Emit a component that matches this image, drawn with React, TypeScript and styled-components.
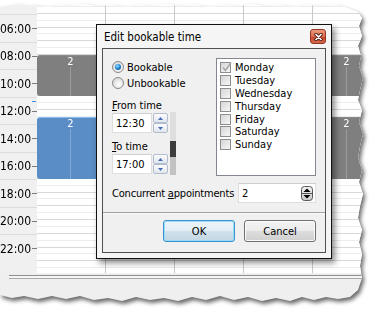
import styled, { createGlobalStyle } from 'styled-components'

const GlobalStyle = createGlobalStyle`
  html, body { margin: 0; padding: 0; background: #fff; }
  body {
    width: 377px;
    height: 313px;
    overflow: hidden;
    font-family: "DejaVu Sans Condensed", "DejaVu Sans", "Liberation Sans", sans-serif;
    font-stretch: condensed;
    font-size: 11px;
    color: #000;
  }
`

const HOUR_PX = 13.75
const START_HOUR = 4

// torn paper outline, clockwise from top-left
const TORN = [
  [0, 7], [8, 6], [18, 4], [26, 6], [34, 5], [48, 7], [60, 5], [72, 6], [85, 4], [98, 6],
  [112, 5], [126, 7], [140, 5], [152, 6], [166, 4], [180, 6], [196, 5], [210, 7], [224, 5],
  [238, 6], [252, 4], [266, 6], [280, 5], [294, 7], [308, 5], [322, 6], [336, 5], [348, 8],
  [358, 12], [362, 18], [359, 26], [362, 36], [358, 46], [361, 56], [359, 66], [363, 78],
  [360, 90], [358, 100], [362, 110], [359, 122], [363, 134], [360, 146], [358, 158],
  [362, 170], [359, 182], [363, 194], [360, 206], [358, 218], [362, 230], [359, 242],
  [362, 254], [360, 266], [362, 278], [358, 290], [350, 297], [338, 299], [326, 297],
  [314, 300], [302, 297], [290, 301], [276, 298], [262, 301], [248, 297], [234, 300],
  [220, 296], [206, 300], [192, 297], [178, 301], [164, 298], [150, 300], [136, 297],
  [122, 301], [108, 298], [94, 300], [80, 296], [66, 299], [52, 296], [38, 299], [24, 296],
  [12, 298], [0, 295],
].map(([x, y]) => `${x}px ${y}px`).join(', ')

const Stage = styled.div`
  position: relative;
  width: 377px;
  height: 313px;
  overflow: hidden;
`

const PaperShadow = styled.div`
  width: 377px;
  height: 313px;
  filter: drop-shadow(2px 3px 2px rgba(0, 0, 0, 0.6));
`

const Paper = styled.div`
  width: 100%;
  height: 100%;
  display: flex;
  flex-direction: column;
  background: #efefef;
  clip-path: polygon(${TORN});
`

const Calendar = styled.div`
  display: grid;
  grid-template-columns: 37px repeat(5, 69px);
  height: 273px;
  background: #fff;
  overflow: hidden;
`

const TimeColumn = styled.div`
  display: flex;
  flex-direction: column;
  padding-top: 14.25px;
  background: #f0f0f0;
`

const TimeSlot = styled.div`
  flex: 0 0 27.5px;
  box-sizing: border-box;
  border-top: 1px solid #dcdcdc;
  display: flex;
  align-items: center;
  justify-content: flex-end;
  position: relative;
`

const TimeLabel = styled.span`
  font-size: 12px;
  white-space: nowrap;
  margin-right: 1px;
`

const Tick = styled.span`
  width: 5px;
  height: 1px;
  background: #7a7a7a;
`

const NowMark = styled.span`
  position: absolute;
  right: 1px;
  top: 3px;
  width: 4px;
  height: 1px;
  background: #3b8fe0;
`

const DayColumn = styled.div`
  position: relative;
  border-right: 1px solid #c8c8c8;
  display: flex;
  flex-direction: column;
`

const HalfSlot = styled.div<{ $hour: boolean }>`
  flex: 0 0 6.875px;
  box-sizing: border-box;
  border-bottom: 1px solid ${p => (p.$hour ? '#d8d8d8' : '#ededed')};
`

const EventBlock = styled.div<{ $tone: 'gray' | 'blue' }>`
  position: absolute;
  left: 0;
  width: 67px;
  box-sizing: border-box;
  border-radius: 3px;
  background: ${p => (p.$tone === 'blue' ? '#5a8cc5' : '#7f7f7f')};
  border-top: 1px solid ${p => (p.$tone === 'blue' ? '#8cbcef' : '#8a8a8a')};
  color: #fff;
  font-size: 11px;
  text-align: center;
  line-height: 12px;
`

const EventLine = styled.span<{ $tone: 'gray' | 'blue' }>`
  position: absolute;
  left: 33px;
  top: 11px;
  bottom: 0;
  width: 1px;
  background: ${p => (p.$tone === 'blue' ? '#7ea8d8' : '#9c9c9c')};
`

const Footer = styled.div`
  flex: 1;
  padding-top: 2px;
`

const FooterRule = styled.div`
  margin-left: 9px;
  height: 4px;
  box-sizing: border-box;
  border-top: 1px solid #8e8e8e;
  border-bottom: 1px solid #a8a8a8;
  background: #f6f6f6;
`

/* dialog */

const Dialog = styled.div`
  position: absolute;
  left: 96px;
  top: 24px;
  width: 236px;
  height: 235px;
  box-sizing: border-box;
  border: 1px solid #111;
  background: #f5f5f5;
  display: flex;
  flex-direction: column;
  box-shadow: 3px 4px 6px rgba(0, 0, 0, 0.45);
`

const TitleBar = styled.div`
  height: 23px;
  flex: 0 0 23px;
  display: flex;
  align-items: center;
  justify-content: space-between;
  padding: 0 5px 0 7px;
`

const Title = styled.span`
  font-size: 11.5px;
  color: #000;
`

const CloseButton = styled.span`
  width: 16px;
  height: 15px;
  box-sizing: border-box;
  border: 1px solid #8f3522;
  border-radius: 3px;
  background: linear-gradient(#ee9a7e 0%, #dc6c4e 50%, #c7462a 51%, #d6674a 100%);
  display: flex;
  align-items: center;
  justify-content: center;
`

const Frame = styled.div`
  flex: 1;
  margin: 0 5px 5px;
  border: 1px solid #505050;
  background: #f0f0f0;
  display: flex;
  flex-direction: column;
`

const TopSection = styled.div`
  display: flex;
  justify-content: space-between;
  padding: 9px 9px 0;
`

const LeftCol = styled.div`
  display: flex;
  flex-direction: column;
  padding-top: 1px;
`

const RadioRow = styled.label`
  display: flex;
  align-items: center;
  gap: 3px;
  height: 16px;
`

const RadioDot = styled.span<{ $checked?: boolean }>`
  width: 12px;
  height: 12px;
  box-sizing: border-box;
  border-radius: 50%;
  border: 1px solid #8a8a8a;
  background: radial-gradient(circle at 60% 65%, #ffffff 0%, #e4e4e4 55%, #c9c9c9 100%);
  display: flex;
  align-items: center;
  justify-content: center;
  &::after {
    content: '';
    display: ${p => (p.$checked ? 'block' : 'none')};
    width: 6px;
    height: 6px;
    border-radius: 50%;
    background: radial-gradient(circle at 40% 35%, #a8e4ff 0%, #1f8ad6 45%, #0b3d70 100%);
  }
`

const TimeArea = styled.div`
  display: flex;
  margin-top: 8px;
`

const TimeFields = styled.div`
  display: flex;
  flex-direction: column;
`

const FieldLabel = styled.div<{ $gap?: number }>`
  height: 14px;
  line-height: 14px;
  margin-top: ${p => p.$gap ?? 0}px;
  white-space: nowrap;
`

const InputRow = styled.div`
  display: flex;
  height: 20px;
`

const TextBox = styled.div<{ $width: number }>`
  width: ${p => p.$width}px;
  flex: 0 0 auto;
  height: 20px;
  box-sizing: border-box;
  border: 1px solid #dedede;
  border-top-color: #cfcfcf;
  background: #fff;
  padding: 0 2px 0 3px;
  display: flex;
  align-items: center;
  justify-content: space-between;
`

const SpinPair = styled.div`
  display: flex;
  flex-direction: column;
  margin-left: 1px;
`

const SpinButton = styled.span`
  width: 15px;
  height: 10px;
  box-sizing: border-box;
  border: 1px solid #b3bccb;
  border-radius: 2px;
  background: linear-gradient(#fbfcfe, #e1e6ee);
  display: flex;
  align-items: center;
  justify-content: center;
`

const Strip = styled.div`
  width: 6px;
  height: 63px;
  margin: 12.5px 0 0 2px;
  background: linear-gradient(
    to bottom,
    #dedede 0, #dedede 29px,
    #3c3c3c 29px, #3c3c3c 45px,
    #c2c2c2 45px, #c2c2c2 100%
  );
`

const DayList = styled.div`
  width: 100px;
  height: 118px;
  box-sizing: border-box;
  border: 1px solid #828790;
  background: #fff;
  padding: 2px 0 0 3px;
  display: flex;
  flex-direction: column;
`

const DayRow = styled.label`
  display: flex;
  align-items: center;
  gap: 4px;
  height: 12.9px;
`

const CheckBox = styled.span`
  position: relative;
  width: 11px;
  height: 11px;
  box-sizing: border-box;
  border: 1px solid #8e8e8e;
  background: linear-gradient(135deg, #d6d6d6, #f6f6f6);
  & > svg { position: absolute; left: 0; top: -2px; }
`

const ConcurrentRow = styled.div`
  display: flex;
  align-items: center;
  justify-content: space-between;
  margin-top: 7px;
  padding: 0 9px;
  height: 20px;
`

const ConcurrentLabel = styled.span`
  white-space: nowrap;
  letter-spacing: -0.2px;
`

const Separator = styled.div`
  margin-top: 9px;
  height: 1px;
  background: #a0a0a0;
  border-bottom: 1px solid #fafafa;
`

const ButtonRow = styled.div`
  display: flex;
  justify-content: flex-end;
  gap: 9px;
  margin-top: 6px;
  padding-right: 9px;
`

const Button = styled.button<{ $default?: boolean }>`
  width: 72px;
  height: 22px;
  box-sizing: border-box;
  border-radius: 3px;
  font: inherit;
  font-size: 11px;
  color: #000;
  padding: 0;
  border: 1px solid ${p => (p.$default ? '#3a92cf' : '#707070')};
  box-shadow: inset 0 0 0 1px ${p => (p.$default ? '#9adcf8' : '#fbfbfb')};
  background: ${p =>
    p.$default
      ? 'linear-gradient(#edf5f9 0%, #e2edf4 50%, #cfe1ec 51%, #c3d8e5 100%)'
      : 'linear-gradient(#f3f3f3 0%, #ebebeb 50%, #dddddd 51%, #cfcfcf 100%)'};
`

const ArrowUp = () => (
  <svg width="5" height="3" viewBox="0 0 5 3"><path d="M0 3 L2.5 0 L5 3 Z" fill="#4a6cb5" /></svg>
)
const ArrowDown = () => (
  <svg width="5" height="3" viewBox="0 0 5 3"><path d="M0 0 L5 0 L2.5 3 Z" fill="#4a6cb5" /></svg>
)

const Spinner = () => (
  <SpinPair>
    <SpinButton><ArrowUp /></SpinButton>
    <SpinButton><ArrowDown /></SpinButton>
  </SpinPair>
)

const NumberSpin = () => (
  <svg width="12" height="15" viewBox="0 0 12 15">
    <defs>
      <linearGradient id="ns" x1="0" y1="0" x2="0" y2="1">
        <stop offset="0" stopColor="#f4f4f4" />
        <stop offset="1" stopColor="#c8c8c8" />
      </linearGradient>
    </defs>
    <rect x="0.5" y="0.5" width="11" height="14" rx="3" fill="url(#ns)" stroke="#555" />
    <line x1="1" y1="7.5" x2="11" y2="7.5" stroke="#555" />
    <path d="M2.5 6 L6 2.5 L9.5 6 Z" fill="#000" />
    <path d="M2.5 9 L9.5 9 L6 12.5 Z" fill="#000" />
  </svg>
)

const CloseGlyph = () => (
  <svg width="9" height="8" viewBox="0 0 9 8">
    <path d="M2 1.5 L7 6.5 M7 1.5 L2 6.5" stroke="#4a1a10" strokeWidth="3.4" strokeLinecap="round" />
    <path d="M2 1.5 L7 6.5 M7 1.5 L2 6.5" stroke="#fff" strokeWidth="1.7" strokeLinecap="round" />
  </svg>
)

const CheckMark = () => (
  <svg width="12" height="12" viewBox="0 0 12 12">
    <path d="M2 6.5 L4.5 9.5 L10 1.5" fill="none" stroke="#a6a6a6" strokeWidth="1.6" />
  </svg>
)

const times = ['06:00', '08:00', '10:00', '12:00', '14:00', '16:00', '18:00', '20:00', '22:00']
const days = ['Monday', 'Tuesday', 'Wednesday', 'Thursday', 'Friday', 'Saturday', 'Sunday']

type CalEvent = { start: number; end: number; tone: 'gray' | 'blue' }
const columns: CalEvent[][] = [
  [{ start: 8, end: 11, tone: 'gray' }, { start: 12.5, end: 17, tone: 'blue' }],
  [], [], [],
  [{ start: 8, end: 11, tone: 'gray' }, { start: 12.5, end: 17, tone: 'gray' }],
]

const App = () => {
  return (
    <Stage>
      <GlobalStyle />
      <PaperShadow>
        <Paper>
          <Calendar>
            <TimeColumn>
              {times.map(t => (
                <TimeSlot key={t}>
                  {t === '12:00' && <NowMark />}
                  <TimeLabel>{t}</TimeLabel>
                  <Tick />
                </TimeSlot>
              ))}
            </TimeColumn>
            {columns.map((events, ci) => (
              <DayColumn key={ci}>
                {Array.from({ length: 40 }, (_, i) => (
                  <HalfSlot key={i} $hour={(i + 1) % 2 === 0} />
                ))}
                {events.map((ev, ei) => (
                  <EventBlock
                    key={ei}
                    $tone={ev.tone}
                    style={{
                      top: (ev.start - START_HOUR) * HOUR_PX,
                      height: (ev.end - ev.start) * HOUR_PX,
                    }}
                  >
                    2
                    <EventLine $tone={ev.tone} />
                  </EventBlock>
                ))}
              </DayColumn>
            ))}
          </Calendar>
          <Footer>
            <FooterRule />
          </Footer>
        </Paper>
      </PaperShadow>

      <Dialog>
        <TitleBar>
          <Title>Edit bookable time</Title>
          <CloseButton><CloseGlyph /></CloseButton>
        </TitleBar>
        <Frame>
          <TopSection>
            <LeftCol>
              <RadioRow><RadioDot $checked />Bookable</RadioRow>
              <RadioRow><RadioDot />Unbookable</RadioRow>
              <TimeArea>
                <TimeFields>
                  <FieldLabel><u>F</u>rom time</FieldLabel>
                  <InputRow>
                    <TextBox $width={40}>12:30</TextBox>
                    <Spinner />
                  </InputRow>
                  <FieldLabel $gap={7}><u>T</u>o time</FieldLabel>
                  <InputRow>
                    <TextBox $width={40}>17:00</TextBox>
                    <Spinner />
                  </InputRow>
                </TimeFields>
                <Strip />
              </TimeArea>
            </LeftCol>
            <DayList>
              {days.map((d, i) => (
                <DayRow key={d}>
                  <CheckBox>{i === 0 && <CheckMark />}</CheckBox>
                  {d}
                </DayRow>
              ))}
            </DayList>
          </TopSection>
          <ConcurrentRow>
            <ConcurrentLabel>Concurrent <u>a</u>ppointments</ConcurrentLabel>
            <TextBox $width={78}>
              2
              <NumberSpin />
            </TextBox>
          </ConcurrentRow>
          <Separator />
          <ButtonRow>
            <Button $default>OK</Button>
            <Button>Cancel</Button>
          </ButtonRow>
        </Frame>
      </Dialog>
    </Stage>
  )
}

export default App
